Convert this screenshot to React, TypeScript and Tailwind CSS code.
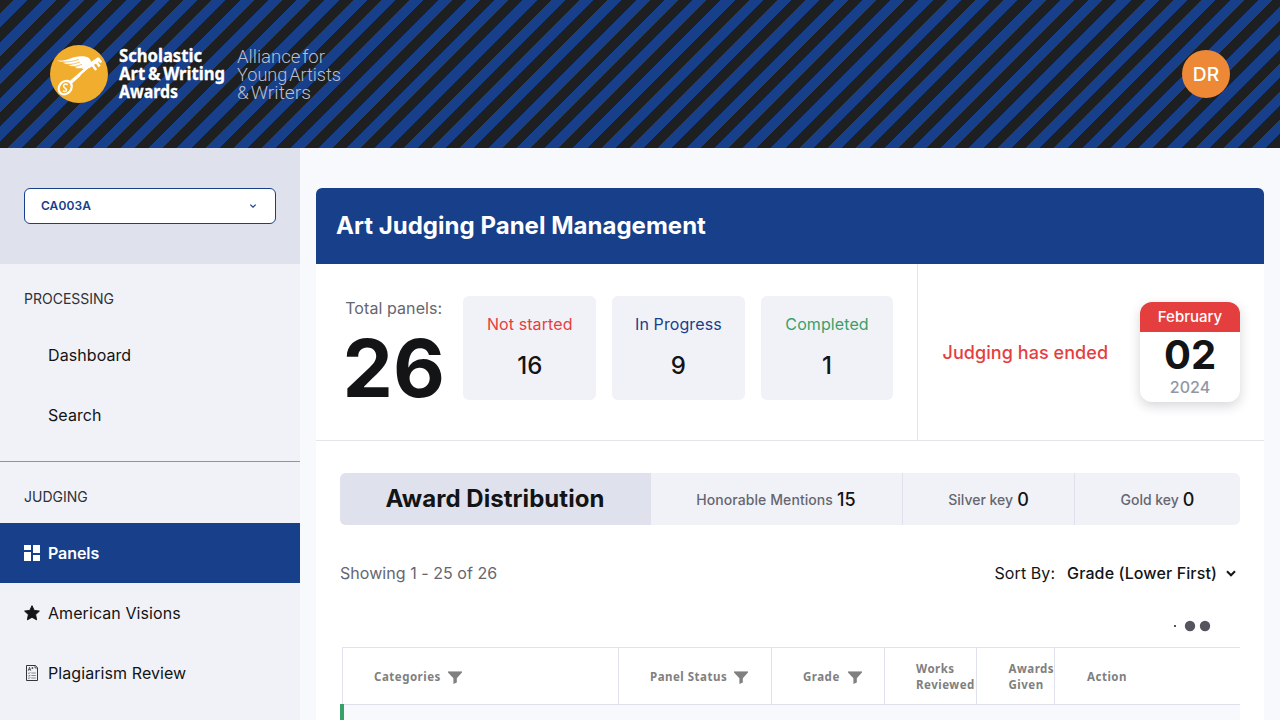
import React from "react";

const stats = [
  { label: "Not started", value: 16, tone: "text-[#e53e3e]" },
  { label: "In Progress", value: 9, tone: "text-[#173f8a]" },
  { label: "Completed", value: 1, tone: "text-[#38a169]" },
];

function Logo() {
  return (
    <svg width="300" height="60" viewBox="0 0 300 60" className="block">
      <circle cx="29" cy="30" r="29" fill="#f1ad2d" />
      <g fill="none" stroke="#fff">
        <ellipse cx="15.200" cy="43.600" rx="6" ry="7.200" transform="rotate(40 15.200 43.600)" strokeWidth="2.200" />
        <path d="M17.600 40.800c-2-1.600-4.600-.4-4 1.700.5 1.700 3 1.700 2.900 3.500-.1 1.400-2.100 2-3.500.8" strokeWidth="1.500" />
        <path d="M20 38.500 L42 19.500" strokeWidth="2.500" />
        <path d="M20.500 39.500 L30 31" strokeWidth="2" />
        <path d="M38 22.500 L49 15" strokeWidth="4" />
        <path d="M42 20.500l4.200 5.500M46 17.500l3.600 5M48 14l3.200 4.500" strokeWidth="2.500" />
      </g>
      <path fill="#fff" d="M7 16.500c8 .8 11-1.600 17-3.300 6-1.500 12-1.300 14.500.5 2 1.500 2.600 4 3.500 5.300l-4 5.500c-2.500-.3-4 .7-6.500.4 1-.5 1.500-.9 2-1.500-3 1.200-6 1-8.500.3l3-1.200c-4 .5-7-.1-9.500-1.200l4-.6c-4 0-7.500-.8-9.500-2l4-.3c-4-.2-8-.8-10-1.900z" />
      <path d="M12 17.800c8 .6 12-1 17-2.300M17 20.300c6 .3 9-1 13-2.300M22 22.600c4 0 7-1 10-2.300" stroke="#f1ad2d" strokeWidth=".7" fill="none" />
      <g fill="#fff" stroke="#fff" strokeWidth=".3" fontFamily="'Noto Sans', sans-serif" fontWeight="700" fontSize="17.500">
        <text x="69" y="17.500" textLength="83" lengthAdjust="spacingAndGlyphs">Scholastic</text>
        <text x="69" y="35.500" textLength="106" lengthAdjust="spacingAndGlyphs">Art&#8201;&amp;&#8201;Writing</text>
        <text x="69" y="53.500" textLength="59" lengthAdjust="spacingAndGlyphs">Awards</text>
      </g>
      <g fill="#b9bfcc" fontFamily="Roboto, sans-serif" fontWeight="300" fontSize="18.500">
        <text x="187" y="18.800" textLength="88" lengthAdjust="spacingAndGlyphs">Alliance&#8202;for</text>
        <text x="187" y="36.800" textLength="104" lengthAdjust="spacingAndGlyphs">Young&#8202;Artists</text>
        <text x="187" y="54.800" textLength="74" lengthAdjust="spacingAndGlyphs">&amp;&#8202;Writers</text>
      </g>
    </svg>
  );
}

function PanelsIcon() {
  return (
    <svg width="16" height="16" viewBox="0 0 16 16" fill="#fff">
      <path d="M0 0h7v5H0zM9 0h7v8H9zM0 7h7v9H0zM9 10h7v6H9z" />
    </svg>
  );
}

function StarIcon() {
  return (
    <svg width="16" height="16" viewBox="0 0 16 16" fill="#121416" stroke="#121416" strokeWidth="1" strokeLinejoin="round">
      <path d="M8 .7l2.200 4.700 5.200.7-3.800 3.500 1 5.200L8 12.300l-4.600 2.500 1-5.200L.6 6.100l5.200-.7z" />
    </svg>
  );
}

function ReviewIcon() {
  return (
    <svg width="16" height="16" viewBox="0 0 16 16" fill="none" stroke="#333539">
      <path d="M2.500.5h8.800l2.200 2.200v12.800h-11z" />
      <path d="M11 .5v2.500h2.500" strokeWidth=".8" />
      <path d="M4.300 5.700l1.200-3.400 1.200 3.400M4.700 4.600h1.600M7.500 3h1.800M8.400 2.100v1.800" strokeWidth=".8" />
      <path d="M4.300 8l.7.7 1.200-1.400M4.300 10.600l.7.7 1.200-1.400M4.300 13l.7.7 1.200-1.400" strokeWidth=".7" />
      <path d="M7.300 8h4.500M7.300 10.500h4.500M7.300 13h4.500" strokeWidth=".8" strokeOpacity=".7" />
    </svg>
  );
}

function Funnel() {
  return (
    <svg width="14" height="13" viewBox="0 0 14 13" className="shrink-0">
      <path d="M0 0h14v1.500L8.800 7.200v4.200L5.400 13V7.200L0 1.500z" fill="#808080" />
      <path d="M0 0h14v1H0z" fill="#b5b5b5" />
    </svg>
  );
}

function NavItem({ label, icon }: { label: string; icon?: React.ReactNode }) {
  return (
    <a className="flex h-[60px] items-center pl-6 text-base tracking-[0.080px] text-[#121416]">
      <span className="flex w-6">{icon}</span>
      {label}
    </a>
  );
}

export default function App() {
  return (
    <div className="flex h-[720px] w-[1280px] flex-col overflow-hidden bg-[#f8f9fd] font-['Inter',sans-serif] text-[#121416]">
      <header className="flex h-[148px] shrink-0 items-center justify-between bg-[repeating-linear-gradient(-45deg,#1d1f21_0px,#1d1f21_10px,#173f8a_10px,#173f8a_20px)] px-[50px]">
        <Logo />
        <div className="flex h-12 w-12 items-center justify-center rounded-full bg-[#ed8936] text-[19.200px] font-medium text-white">DR</div>
      </header>

      <div className="flex min-h-0 flex-1">
        <aside className="w-[300px] shrink-0 bg-[#f1f2f7]">
          <div className="flex h-[116px] items-center bg-[#dfe2ec] px-6">
            <button className="flex h-9 w-full items-center justify-between rounded-md border border-[#173f8a] bg-white pl-4 pr-[18px] text-xs font-semibold tracking-[0.080px] text-[#173f8a]">
              CA003A
              <svg width="8" height="6" viewBox="0 0 8 6" fill="none" stroke="#173f8a" strokeWidth="1.200">
                <path d="M1.300 1.600L4 4.200l2.700-2.600" />
              </svg>
            </button>
          </div>
          <nav>
            <h3 className="flex h-[61px] items-center pl-6 pt-[9px] text-sm text-[#2d3036]">PROCESSING</h3>
            <NavItem label="Dashboard" />
            <NavItem label="Search" />
            <div className="mt-4 border-b border-[#8f94a3]" />
            <h3 className="flex h-[61px] items-center pl-6 pt-[9px] text-sm text-[#2d3036]">JUDGING</h3>
            <a className="flex h-[60px] items-center bg-[#173f8a] pl-6 text-base font-semibold tracking-[-0.080px] text-white">
              <span className="flex w-6"><PanelsIcon /></span>
              Panels
            </a>
            <NavItem label="American Visions" icon={<StarIcon />} />
            <NavItem label="Plagiarism Review" icon={<ReviewIcon />} />
          </nav>
        </aside>

        <main className="min-w-0 flex-1 px-4 pt-10">
          <div className="flex h-[532px] flex-col overflow-hidden rounded-t-md bg-white">
            <h1 className="flex h-[76px] shrink-0 items-center bg-[#173f8a] pl-5 text-2xl font-bold tracking-[0.020px] text-white">Art Judging Panel Management</h1>

            <section className="flex h-[177px] shrink-0 border-b border-[#e2e5ee]">
              <div className="flex w-[602px] shrink-0 gap-4 border-r border-[#e2e5ee] pr-[23.600px] pt-8">
                <div className="flex w-[131.400px] shrink-0 flex-col items-center pl-[24px]">
                  <p className="whitespace-nowrap text-base leading-6 tracking-[0.080px] text-[#65666f]">Total panels:</p>
                  <p className="text-[80px] font-bold leading-[96px]">26</p>
                </div>
                {stats.map((s) => (
                  <div key={s.label} className="flex h-[104px] flex-1 flex-col items-center rounded-md bg-[#f1f2f7] pt-4">
                    <p className={"whitespace-nowrap text-base leading-6 tracking-[0.100px] " + s.tone}>{s.label}</p>
                    <p className="mt-3 text-2xl font-medium leading-9">{s.value}</p>
                  </div>
                ))}
              </div>
              <div className="flex flex-1 items-center justify-between pl-[24.500px] pr-6">
                <p className="pt-0.5 text-lg font-medium tracking-[0.060px] text-[#e53e3e]">Judging has ended</p>
                <div className="h-[100px] w-[100px] overflow-hidden rounded-xl bg-white text-center shadow-[0_4px_12px_rgba(20,25,40,0.18)]">
                  <div className="h-[30px] bg-[#e53e3e] text-[15px] font-medium leading-[30px] text-white">February</div>
                  <div className="h-[46px] text-[40px] font-bold leading-[46px]">02</div>
                  <div className="text-base font-medium leading-[19px] text-[#9297a3]">2024</div>
                </div>
              </div>
            </section>

            <section className="flex flex-1 flex-col px-6 pt-8">
              <div className="flex h-[52px] shrink-0 overflow-hidden rounded-md bg-[#f1f2f7] text-sm font-medium text-[#65666f]">
                <h2 className="flex w-[311px] items-center justify-center bg-[#dfe2ec] pr-px text-2xl font-bold tracking-[0.050px] text-[#121416]">Award Distribution</h2>
                <div className="flex w-[252px] items-center justify-center gap-1 border-r border-[#dfe2ec] pr-px pt-px tracking-[0.080px]">Honorable Mentions <b className="text-lg font-medium text-[#121416]">15</b></div>
                <div className="flex w-[172px] items-center justify-center gap-1 border-r border-[#dfe2ec] pt-px">Silver key <b className="text-lg font-medium text-[#121416]">0</b></div>
                <div className="flex flex-1 items-center justify-center gap-1 pt-px">Gold key <b className="text-lg font-medium text-[#121416]">0</b></div>
              </div>

              <div className="mt-9 flex h-6 items-center justify-between text-base">
                <p className="tracking-[0.050px] text-[#65666f]">Showing 1 - 25 of 26</p>
                <div className="flex items-center pr-1">
                  <span className="tracking-[0.080px]">Sort By:</span>
                  <span className="ml-3 font-medium tracking-[0.120px]">Grade (Lower First)</span>
                  <svg width="10" height="7" viewBox="0 0 10 7" className="ml-[9px]" fill="none" stroke="#121416" strokeWidth="2">
                    <path d="M1 1.300l4 4 4-4" />
                  </svg>
                </div>
              </div>

              <div className="mr-[29px] mt-[35px] flex h-3 items-center justify-end">
                <svg width="40" height="12" viewBox="0 0 40 12" fill="#56555f">
                  <rect x="3" y="5" width="2" height="2" />
                  <circle cx="19" cy="6" r="5.200" />
                  <circle cx="34" cy="6" r="5.200" />
                </svg>
              </div>

              <div className="ml-[2px] mt-[15px] flex h-[58px] shrink-0 overflow-hidden border-y border-l border-[#dfe2ec] font-['Noto_Sans',sans-serif] text-[11.500px] font-bold leading-4 tracking-[0.500px] text-[#808080] [&>div]:flex [&>div]:shrink-0 [&>div]:items-center [&>div]:border-r [&>div]:border-[#dfe2ec] [&>div]:pt-0.5">
                <div className="w-[276px] gap-[7px] pl-[31px]">Categories <Funnel /></div>
                <div className="w-[153px] gap-[7px] pl-[31px]">Panel Status <Funnel /></div>
                <div className="w-[113px] gap-2 pl-[31px]">Grade <Funnel /></div>
                <div className="w-[92px] pl-[31px]">Works<br />Reviewed</div>
                <div className="w-[78px] pl-[31.500px]">Awards<br />Given</div>
                <div className="w-[200px] pl-8">Action</div>
              </div>
              <div className="relative -mt-px h-4 border-l-4 border-[#38a169]">
                <div className="mt-px h-[15px] bg-[#f8f9fd]" />
              </div>
            </section>
          </div>
        </main>
      </div>
    </div>
  );
}
